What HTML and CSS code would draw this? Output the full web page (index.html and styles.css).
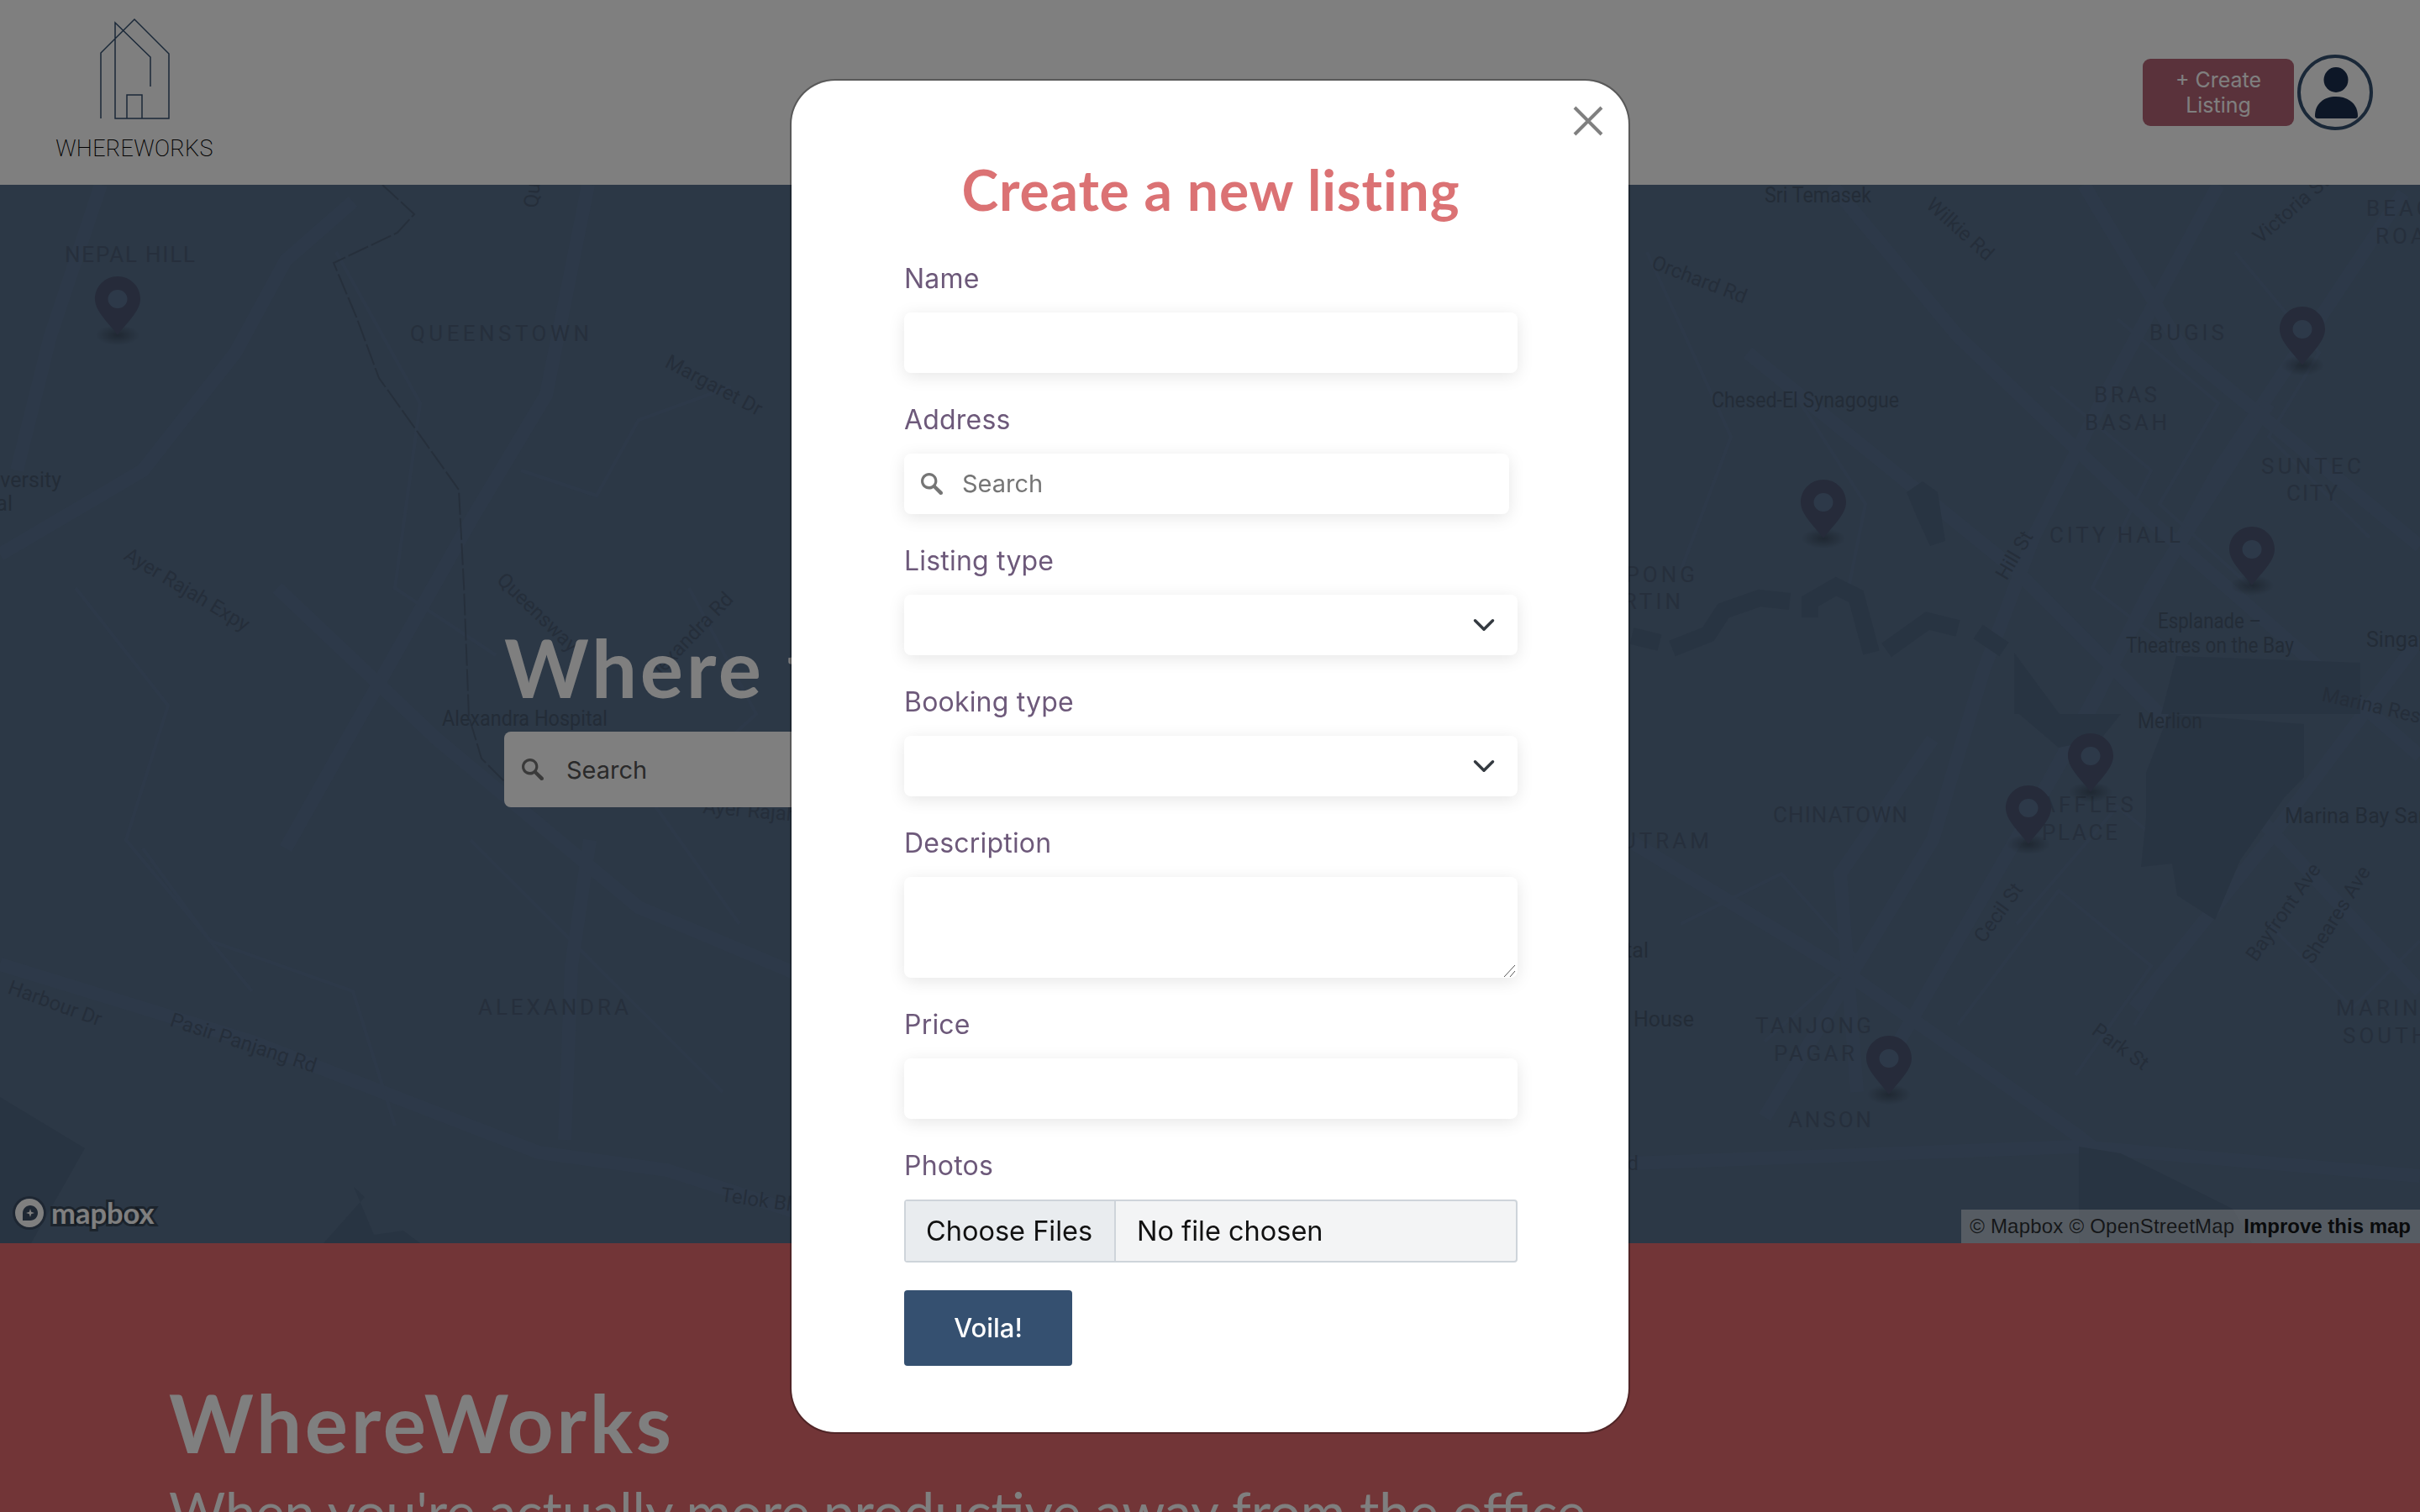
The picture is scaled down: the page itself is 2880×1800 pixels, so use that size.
FILE: index.html
```html
<!DOCTYPE html>
<html lang="en">
<head>
	<meta charset="UTF-8">
	<title>WhereWorks</title>
	<link rel="stylesheet" href="styles.css">
</head>
<body>
	<header class="top-bar">
		<a class="brand" href="#">
			<svg class="brand-mark" viewBox="0 0 90 122" width="90" height="122">
				<path d="M2 120V42L42 2L83 43V120H19V6L61 47V82"/>
				<path d="M33 120V92H51V120"/>
			</svg>
			<span class="brand-name">WHEREWORKS</span>
		</a>
		<div class="top-actions">
			<a class="create-btn" href="#">+ Create<br>Listing</a>
			<a class="avatar" href="#">
				<svg viewBox="0 0 82 82" width="82" height="82">
					<ellipse cx="42" cy="26" rx="14.5" ry="15"/>
					<path d="M17 69C17 54 28 46 42 46C56 46 68 54 68 69C68 71 67 72 65 72H20C18 72 17 71 17 69Z"/>
				</svg>
			</a>
		</div>
	</header>

	<section class="map-area">
		<svg class="map" viewBox="0 220 2880 1260" width="2880" height="1260">
			<g class="roads-thick">
				<path d="M0 660L170 560L280 420L340 310L420 240"/>
				<path d="M120 220L60 400L20 560"/>
				<path d="M340 1010L560 620L650 470L700 220"/>
				<path d="M0 1148L300 1240L641 1372L794 1393L950 1444"/>
				<path d="M702 1000L680 1150L672 1357"/>
				<path d="M330 700L520 880L760 1080L950 1160"/>
				<path d="M2400 1000L2640 560L2860 230"/>
				<path d="M2260 1240L2480 860L2560 700L2700 480"/>
				<path d="M2100 1330L2300 1000L2360 800L2420 640L2500 480L2640 220"/>
				<path d="M2540 1200L2700 1000L2880 760"/>
				<path d="M2080 420L2400 680L2620 900L2880 1180"/>
				<path d="M2180 220L2330 400L2560 620L2880 900"/>
				<path d="M2480 220L2600 420L2880 650"/>
				<path d="M1938 1000L2200 1160L2470 1350L2640 1480"/>
				<path d="M1938 1385L2474 1365L2880 1400"/>
				<path d="M2210 1300L2190 1040L2300 880"/>
			</g>
			<g class="roads-thin">
				<path d="M90 700L200 840L150 1000L300 1180"/>
				<path d="M400 300L500 480L470 700L590 780"/>
				<path d="M620 560L710 590L760 500L870 460"/>
				<path d="M820 700L900 850L780 960L880 1100"/>
				<path d="M170 1010L250 1120L420 1180L470 1340"/>
				<path d="M560 1000L700 1140L860 1300"/>
				<path d="M1960 300L2060 520L2000 680"/>
				<path d="M2130 460L2220 600L2200 700"/>
				<path d="M2440 460L2560 560L2490 700L2620 800"/>
				<path d="M2520 380L2640 480L2570 600L2680 700"/>
				<path d="M2400 1100L2520 960L2640 1060L2540 1220"/>
				<path d="M2330 1220L2450 1060L2560 1150L2470 1280"/>
				<path d="M2700 1100L2800 1200L2880 1120"/>
				<path d="M2000 1100L2120 1040L2210 1140L2100 1240"/>
				<path d="M2660 300L2760 420L2700 520L2820 640"/>
			</g>
			<g class="water">
				<path d="M2581 850L2742 862V925L2718 950L2666 1024L2636 1095L2591 1066L2585 1028L2548 1032L2554 974V920Z"/>
				<path d="M2403 850H2524L2500 880L2450 890Z"/>
				<path d="M2590 781L2809 789V850H2572Z"/>
				<path d="M2397 777L2451 850H2397Z"/>
				<path d="M2474 1365L2524 1373L2657 1439L2680 1480H2474Z"/>
				<path d="M0 1306L101 1367L37 1480H0Z"/>
				<path d="M421 1413L434 1425L385 1480H500L480 1465L445 1470L421 1413Z"/>
				<path d="M2269 586L2288 573L2306 586L2315 644L2297 650L2281 615Z"/>
				<path class="river" d="M1942 757L1975 765M1990 772L2033 755L2051 727L2094 712L2130 716M2154 735L2154 716L2185 698L2209 710L2227 777M2245 774L2294 739L2330 748M2354 752L2385 773"/>
			</g>
			<path class="rail" d="M455 220L493 255L473 277L397 313L424 377L451 450L464 468L546 583L552 696L558 853L573 903L600 930"/>
			<g class="map-place">
				<text x="77" y="312" textLength="159">NEPAL HILL</text>
				<text x="488" y="406" textLength="217">QUEENSTOWN</text>
				<text x="569" y="1208" textLength="183">ALEXANDRA</text>
				<text x="2816" y="257">BEACH</text>
				<text x="2827" y="290">ROAD</text>
				<text x="2558" y="405" textLength="93">BUGIS</text>
				<text x="2492" y="479" textLength="79">BRAS</text>
				<text x="2481" y="512" textLength="102">BASAH</text>
				<text x="2691" y="564" textLength="123">SUNTEC</text>
				<text x="2721" y="596" textLength="65">CITY</text>
				<text x="2439" y="646" textLength="160">CITY HALL</text>
				<text x="2021" y="693" text-anchor="end">KAMPONG</text>
				<text x="2004" y="725" text-anchor="end">MARTIN</text>
				<text x="2110" y="979" textLength="164">CHINATOWN</text>
				<text x="2038" y="1010" text-anchor="end">OUTRAM</text>
				<text x="2543" y="967" text-anchor="end">RAFFLES</text>
				<text x="2430" y="1000" textLength="94">PLACE</text>
				<text x="2089" y="1230" textLength="142">TANJONG</text>
				<text x="2111" y="1263" textLength="100">PAGAR</text>
				<text x="2128" y="1342" textLength="103">ANSON</text>
				<text x="2780" y="1209">MARINA</text>
				<text x="2788" y="1242">SOUTH</text>
			</g>
			<g class="map-road">
				<text x="640" y="248" transform="rotate(-85 640 248)" text-anchor="start">Queens</text>
				<text x="790" y="436" transform="rotate(28 790 436)">Margaret Dr</text>
				<text x="146" y="665" transform="rotate(31 146 665)">Ayer Rajah Expy</text>
				<text x="590" y="692" transform="rotate(44 590 692)">Queensway</text>
				<text x="776" y="816" transform="rotate(-46 776 816)">Alexandra Rd</text>
				<text x="836" y="968" transform="rotate(5 836 968)">Ayer Rajah</text>
				<text x="8" y="1182" transform="rotate(20 8 1182)">Harbour Dr</text>
				<text x="201" y="1221" transform="rotate(18 201 1221)">Pasir Panjang Rd</text>
				<text x="857" y="1430" transform="rotate(8 857 1430)">Telok Blangah Rd</text>
				<text x="1964" y="319" transform="rotate(21 1964 319)">Orchard Rd</text>
				<text x="2291" y="246" transform="rotate(42 2291 246)">Wilkie Rd</text>
				<text x="2690" y="291" transform="rotate(-41 2690 291)">Victoria St</text>
				<text x="2388" y="692" transform="rotate(-59 2388 692)">Hill St</text>
				<text x="2361" y="1124" transform="rotate(-54 2361 1124)">Cecil St</text>
				<text x="2685" y="1146" transform="rotate(-55 2685 1146)">Bayfront Ave</text>
				<text x="2752" y="1149" transform="rotate(-58 2752 1149)">Sheares Ave</text>
				<text x="2488" y="1230" transform="rotate(36 2488 1230)">Park St</text>
				<text x="2762" y="834" transform="rotate(13 2762 834)" font-style="italic">Marina Reservoir</text>
				<text x="1950" y="1393" text-anchor="end">Road</text>
			</g>
			<g class="map-poi">
				<text x="73" y="580" text-anchor="end">University</text>
				<text x="15" y="608" text-anchor="end">Hospital</text>
				<text x="526" y="864" textLength="197" lengthAdjust="spacingAndGlyphs">Alexandra Hospital</text>
				<text x="2100" y="241" textLength="127" lengthAdjust="spacingAndGlyphs">Sri Temasek</text>
				<text x="2037" y="485" textLength="223" lengthAdjust="spacingAndGlyphs">Chesed-El Synagogue</text>
				<text x="2568" y="748" textLength="123" lengthAdjust="spacingAndGlyphs">Esplanade –</text>
				<text x="2530" y="777" textLength="200" lengthAdjust="spacingAndGlyphs">Theatres on the Bay</text>
				<text x="2816" y="770">Singapore</text>
				<text x="2544" y="867" textLength="77" lengthAdjust="spacingAndGlyphs">Merlion</text>
				<text x="2719" y="980">Marina Bay Sands</text>
				<text x="1962" y="1140" text-anchor="end">Hospital</text>
				<text x="2016" y="1222" text-anchor="end">Tea House</text>
			</g>
			<defs>
				<radialGradient id="pin-shade">
					<stop offset="0" stop-color="#000" stop-opacity=".28"/>
					<stop offset="1" stop-color="#000" stop-opacity="0"/>
				</radialGradient>
				<g id="pin">
					<ellipse cx="27" cy="70" rx="26" ry="12" fill="url(#pin-shade)"/>
					<path class="pin-body" d="M27 0C12 0 0 12 0 27C0 42 18 57 27 70C36 57 54 42 54 27C54 12 42 0 27 0Z"/>
					<ellipse class="pin-hole" cx="27" cy="27" rx="11.5" ry="11"/>
				</g>
			</defs>
			<use href="#pin" x="113" y="329"/>
			<use href="#pin" x="2713" y="365"/>
			<use href="#pin" x="2143" y="571"/>
			<use href="#pin" x="2653" y="627"/>
			<use href="#pin" x="2461" y="873"/>
			<use href="#pin" x="2387" y="935"/>
			<use href="#pin" x="2221" y="1233"/>
		</svg>

		<div class="hero">
			<h1 class="hero-title">Where to work?</h1>
			<div class="hero-search">
				<svg viewBox="0 0 18 18" width="36" height="36"><path d="M7.4 2.5c-2.7 0-4.9 2.2-4.9 4.9s2.2 4.9 4.9 4.9c1 0 1.8-.2 2.5-.8l3.7 3.7c.2.2.4.3.8.3.7 0 1.1-.4 1.1-1.1 0-.3-.1-.5-.3-.8L11.4 10c.4-.8.8-1.6.8-2.5.1-2.8-2.1-5-4.8-5zm0 1.6c1.8 0 3.2 1.4 3.2 3.2s-1.4 3.2-3.2 3.2-3.3-1.3-3.3-3.1 1.4-3.3 3.3-3.3z"/></svg>
				<span>Search</span>
			</div>
		</div>

		<div class="map-logo">
			<svg viewBox="0 0 40 40" width="40" height="40">
				<circle cx="20" cy="20" r="20" class="logo-ring"/>
				<circle cx="20" cy="20" r="17" class="logo-disc"/>
				<path class="logo-hole" d="M21 11C26 11 30 15 30 20C30 25 26 29 21 29H12V20C12 15 16 11 21 11Z"/>
				<path class="logo-disc" d="M21 15L22.2 18.8L26 20L22.2 21.2L21 25L19.8 21.2L16 20L19.8 18.8Z"/>
			</svg>
			<span>mapbox</span>
		</div>
		<div class="attribution">
			<span>© Mapbox</span>
			<span>© OpenStreetMap</span>
			<strong>Improve this map</strong>
		</div>
	</section>

	<section class="about">
		<h2 class="about-title">WhereWorks</h2>
		<p class="about-text">When you're actually more productive away from the office</p>
	</section>

	<div class="backdrop">
		<div class="modal">
			<button class="modal-close" type="button">
				<svg viewBox="0 0 36 36" width="36" height="36"><path d="M2 2L34 34M34 2L2 34"/></svg>
			</button>
			<h2 class="modal-title">Create a new listing</h2>
			<form class="listing-form">
				<div class="field">
					<label class="field-label">Name</label>
					<input class="field-input" type="text">
				</div>
				<div class="field">
					<label class="field-label">Address</label>
					<div class="field-input address-search">
						<svg viewBox="0 0 18 18" width="36" height="36"><path d="M7.4 2.5c-2.7 0-4.9 2.2-4.9 4.9s2.2 4.9 4.9 4.9c1 0 1.8-.2 2.5-.8l3.7 3.7c.2.2.4.3.8.3.7 0 1.1-.4 1.1-1.1 0-.3-.1-.5-.3-.8L11.4 10c.4-.8.8-1.6.8-2.5.1-2.8-2.1-5-4.8-5zm0 1.6c1.8 0 3.2 1.4 3.2 3.2s-1.4 3.2-3.2 3.2-3.3-1.3-3.3-3.1 1.4-3.3 3.3-3.3z"/></svg>
						<span>Search</span>
					</div>
				</div>
				<div class="field">
					<label class="field-label">Listing type</label>
					<div class="select-wrap">
						<select class="field-input"><option></option></select>
						<svg class="chevron" viewBox="0 0 16 16" width="28" height="28"><path d="M2 5l6 6 6-6"/></svg>
					</div>
				</div>
				<div class="field">
					<label class="field-label">Booking type</label>
					<div class="select-wrap">
						<select class="field-input"><option></option></select>
						<svg class="chevron" viewBox="0 0 16 16" width="28" height="28"><path d="M2 5l6 6 6-6"/></svg>
					</div>
				</div>
				<div class="field">
					<label class="field-label">Description</label>
					<div class="select-wrap">
						<textarea class="field-input field-area"></textarea>
						<svg class="grip" viewBox="0 0 15 15" width="15" height="15"><path d="M1 15L14 1M8 15L14 8"/></svg>
					</div>
				</div>
				<div class="field">
					<label class="field-label">Price</label>
					<input class="field-input" type="text">
				</div>
				<div class="field field-last">
					<label class="field-label">Photos</label>
					<div class="file-input">
						<span class="file-btn">Choose Files</span>
						<span class="file-name">No file chosen</span>
					</div>
				</div>
				<button class="submit-btn" type="button">Voila!</button>
			</form>
		</div>
	</div>
</body>
</html>
```

FILE: styles.css
```css
html,body{
	margin:0;
	padding:0;
	height:1800px;
	overflow:hidden;
}
body{
	font-family:"Inter","Liberation Sans",sans-serif;
	background:#fff;
}
a{
	text-decoration:none;
}
h1,h2,p{
	margin:0;
}

/* header */
.top-bar{
	display:flex;
	justify-content:space-between;
	height:220px;
	background:#fff;
}
.brand{
	display:flex;
	flex-direction:column;
	align-items:center;
	width:190px;
	margin-left:65px;
	padding-top:21px;
}
.brand-mark{
	margin-left:6px;
	fill:none;
	stroke:#355070;
	stroke-width:1.5;
}
.brand-name{
	margin-top:19px;
	font:200 27px/30px "Roboto",sans-serif;
	color:#000;
	letter-spacing:.3px;
	white-space:nowrap;
}
.top-actions{
	display:flex;
	align-items:center;
	gap:4px;
	margin-right:56px;
}
.create-btn{
	display:block;
	width:180px;
	height:80px;
	padding-top:10px;
	box-sizing:border-box;
	border-radius:9px;
	background:#b56576;
	color:#fff;
	font:400 25px/30px "Inter",sans-serif;
	text-align:center;
}
.avatar{
	display:block;
	width:90px;
	height:90px;
	box-sizing:border-box;
	border:4px solid #355070;
	border-radius:50%;
}
.avatar svg{
	display:block;
	fill:#1a2f4e;
}

/* map */
.map-area{
	position:relative;
	height:1260px;
	overflow:hidden;
	background:#58708c;
}
.map{
	position:absolute;
	left:0;
	top:0;
}
.water{
	fill:#516884;
}
.water .river{
	fill:none;
	stroke:#516884;
	stroke-width:20;
}
.roads-thick path,.roads-thin path{
	fill:none;
	stroke:#5b7392;
}
.roads-thick path{
	stroke-width:16;
}
.roads-thin path{
	stroke-width:4;
}
.rail{
	fill:none;
	stroke:#4c5f77;
	stroke-width:2;
	stroke-dasharray:26 4;
}
.map-place text{
	font:400 26px "Roboto",sans-serif;
	letter-spacing:4px;
	fill:#4c5f78;
}
.map-road text{
	font:400 24px "Roboto",sans-serif;
	fill:#4a5c75;
}
.map-poi text{
	font:400 25px "Roboto",sans-serif;
	fill:#47586f;
}
.pin-body{
	fill:#4c5674;
}
.pin-hole{
	fill:#5b7392;
}
.hero{
	position:absolute;
	left:600px;
	top:514px;
	width:1000px;
}
.hero-title{
	font:700 96px/120px "Lato",sans-serif;
	color:#fff;
	letter-spacing:3.7px;
	white-space:nowrap;
}
.hero-search{
	display:flex;
	align-items:center;
	gap:22px;
	height:90px;
	margin-top:17px;
	padding-left:16px;
	border-radius:8px;
	background:#fff;
	font:400 29px "Inter",sans-serif;
	color:#555;
}
.hero-search svg{
	fill:#757575;
}
.map-logo{
	position:absolute;
	left:15px;
	bottom:16px;
	display:flex;
	align-items:center;
	gap:6px;
	font:700 34.5px/40px "Lato",sans-serif;
	color:#fff;
	-webkit-text-stroke:6px rgba(0,0,0,.35);
	paint-order:stroke fill;
}
.logo-ring{
	fill:#3c4e66;
}
.logo-disc{
	fill:#fff;
}
.logo-hole{
	fill:#3c4e66;
}
.attribution{
	position:absolute;
	right:0;
	bottom:0;
	display:flex;
	gap:7px;
	height:40px;
	padding:0 11px 0 10px;
	background:rgba(255,255,255,.5);
	font:400 24px/40px "Liberation Sans",sans-serif;
	color:rgba(0,0,0,.75);
}
.attribution span{
	letter-spacing:.2px;
}
.attribution strong{
	margin-left:4px;
	color:rgba(0,0,0,.9);
}

/* about */
.about{
	height:320px;
	padding:153px 0 0 201px;
	box-sizing:border-box;
	background:#e56b6f;
	color:#fff;
}
.about-title{
	font:700 96px/120px "Lato",sans-serif;
	letter-spacing:3.7px;
}
.about-text{
	margin-top:10px;
	font:400 65px/72px "Lato",sans-serif;
	white-space:nowrap;
}

/* modal */
.backdrop{
	position:fixed;
	left:0;
	top:0;
	right:0;
	bottom:0;
	display:flex;
	align-items:center;
	justify-content:center;
	background:rgba(0,0,0,.5);
}
.modal{
	position:relative;
	width:1000px;
	height:1613px;
	box-sizing:border-box;
	padding:82px 132px 0 134px;
	border:2px solid rgba(0,0,0,.3);
	border-radius:54px;
	background:#fff;
	background-clip:padding-box;
}
.modal-close{
	position:absolute;
	top:30px;
	right:30px;
	width:36px;
	height:36px;
	padding:0;
	border:0;
	background:none;
}
.modal-close svg{
	display:block;
	fill:none;
	stroke:#808080;
	stroke-width:4;
}
.modal-title{
	height:96px;
	margin-bottom:34px;
	font:700 66px/96px "Lato",sans-serif;
	color:#db7274;
	letter-spacing:.85px;
	text-align:center;
}
.field{
	margin-bottom:32px;
}
.field-last{
	margin-bottom:33px;
}
.field-label{
	display:block;
	height:48px;
	margin-bottom:16px;
	font:400 32px/48px "Inter",sans-serif;
	color:#6d597a;
	letter-spacing:.2px;
}
.field-input{
	display:block;
	width:100%;
	height:72px;
	box-sizing:border-box;
	border:0;
	border-radius:8px;
	background:#fff;
	box-shadow:0 4px 20px rgba(0,0,0,.1);
	appearance:none;
	outline:none;
}
.field-area{
	height:120px;
	resize:none;
}
.address-search{
	display:flex;
	align-items:center;
	gap:18px;
	width:720px;
	padding-left:15px;
	font:400 29px "Inter",sans-serif;
	color:#757575;
}
.address-search svg{
	fill:#757575;
}
.select-wrap{
	position:relative;
}
.chevron{
	position:absolute;
	right:26px;
	top:22px;
	fill:none;
	stroke:#343a40;
	stroke-width:2;
	stroke-linecap:round;
	stroke-linejoin:round;
}
.grip{
	position:absolute;
	right:2px;
	bottom:1px;
	fill:none;
	stroke:#555;
	stroke-width:1;
}
.file-input{
	display:flex;
	height:75px;
	box-sizing:border-box;
	border:2px solid #ced4da;
	border-radius:4px;
	background:#f3f4f5;
	font:400 32.5px/71px "Inter",sans-serif;
	color:#111;
}
.file-btn{
	width:250px;
	box-sizing:border-box;
	padding-left:24px;
	border-right:2px solid #ced4da;
	background:#e9ecef;
}
.file-name{
	padding-left:25px;
}
.submit-btn{
	display:block;
	width:200px;
	height:90px;
	padding:0;
	border:0;
	border-radius:4px;
	background:#355070;
	color:#fff;
	font:500 31px "Inter",sans-serif;
}
```
